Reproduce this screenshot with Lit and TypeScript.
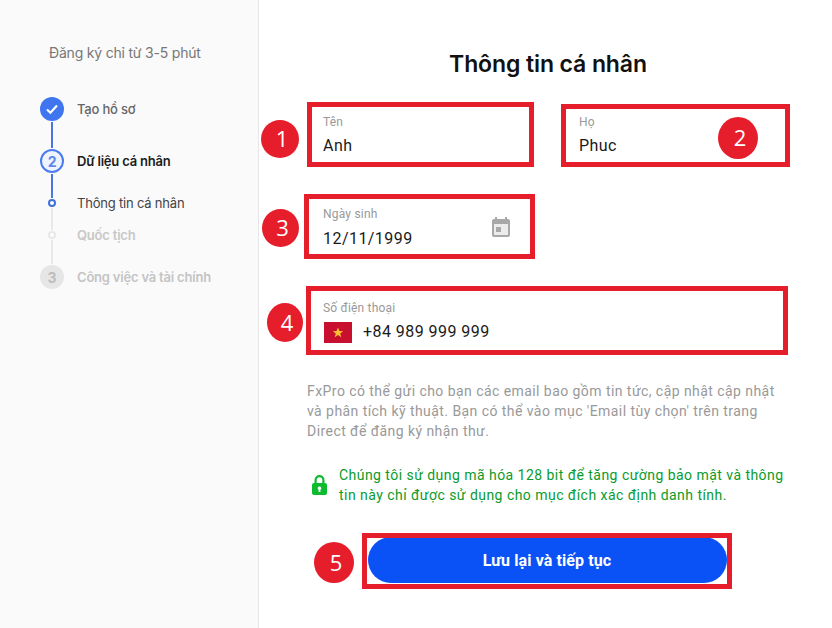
import { LitElement, html, css, svg } from "lit";
import { customElement } from "lit/decorators.js";

const calendarIcon = svg`<path d="M5 3h1V1h2v2h8V1h2v2h1c1.100 0 2 .9 2 2v14c0 1.100-.9 2-2 2H5c-1.100 0-2-.9-2-2V5c0-1.100.9-2 2-2zm0 5v11h14V8H5z" fill="#a8a8a8"/><path d="M5 8h14v11H5z" fill="#ececec"/><path d="M7 11h5v5H7z" fill="#a8a8a8"/>`;

@customElement("app-root")
export class AppRoot extends LitElement {
  static styles = css`
    :host {
      display: block;
      position: relative;
      width: 832px;
      height: 628px;
      overflow: hidden;
      background: #fff;
      font-family: Roboto, "Liberation Sans", sans-serif;
    }
    .page {
      display: flex;
      height: 100%;
    }

    /* sidebar */
    .side {
      width: 258px;
      flex: none;
      background: #fafafa;
      border-right: 1px solid #e6e6e6;
      font-family: Inter, "Liberation Sans", sans-serif;
      letter-spacing: -0.2px;
    }
    .side-title {
      margin: 44px 0 0 49px;
      font-size: 14px;
      line-height: 18px;
      color: #777;
    }
    .steps {
      margin: 35px 0 0 40px;
    }
    .step {
      display: flex;
      gap: 13px;
      font-size: 13px;
    }
    .rail {
      width: 24px;
      flex: none;
      display: flex;
      flex-direction: column;
      align-items: center;
    }
    .line {
      flex: 1;
      width: 2px;
      margin: 1px 0;
      background: #4a76e0;
    }
    .line.off {
      background: #e8e8e8;
    }
    .h1 { height: 52px; }
    .h2 { height: 50px; }
    .h3 { height: 32px; }
    .h4 { height: 34px; }
    .num {
      width: 24px;
      height: 24px;
      box-sizing: border-box;
      flex: none;
      border-radius: 50%;
      display: flex;
      align-items: center;
      justify-content: center;
      font-size: 14px;
      font-weight: 700;
    }
    .num.done { background: #3f76f0; }
    .num.now {
      border: 2px solid #4a7cf0;
      background: #eef3fe;
      color: #5f88ea;
    }
    .num.off {
      background: #e6e6e6;
      color: #bdbdbd;
    }
    .dot {
      width: 8px;
      height: 8px;
      box-sizing: border-box;
      flex: none;
      border-radius: 50%;
      border: 2px solid #3f6fdc;
      background: #fff;
    }
    .dot.off { border-color: #e8e8e8; }
    .label { line-height: 24px; color: #666; font-weight: 500; white-space: nowrap; }
    .label.now { color: #1c1c1c; font-weight: 600; }
    .label.sub { line-height: 8px; color: #444; font-weight: 400; }
    .label.sub.off { color: #c8c8c8; }
    .label.off { color: #c4c4c4; font-weight: 600; }

    /* form */
    .main {
      flex: 1;
      padding-left: 48px;
    }
    .form {
      width: 480px;
    }
    h1 {
      margin: 48px 0 25px;
      padding-left: 2px;
      font: 600 23px/32px Inter, "Liberation Sans", sans-serif;
      letter-spacing: -0.1px;
      color: #111;
      text-align: center;
    }
    .fields {
      display: grid;
      grid-template-columns: 232px 232px;
      column-gap: 24px;
      row-gap: 30px;
    }
    .field {
      position: relative;
      height: 62px;
      box-sizing: border-box;
      padding: 10px 16px 0;
    }
    .field.wide {
      grid-column: 1 / 3;
      margin-top: 2px;
    }
    .field-label {
      font-size: 12px;
      line-height: 14px;
      color: #999;
      letter-spacing: 0.2px;
    }
    .field-value {
      margin-top: 5px;
      font-size: 16px;
      line-height: 24px;
      color: #1a1a1a;
      letter-spacing: 0.45px;
    }
    .field-value.date { margin-top: 6px; }
    .phone {
      display: flex;
      align-items: center;
      gap: 11px;
    }
    .cal {
      position: absolute;
      right: 26px;
      top: 19px;
      width: 24px;
      height: 24px;
    }
    .flag { display: block; margin-left: 1px; }
    .note {
      margin: 28px 0 0;
      font-size: 14px;
      line-height: 20px;
      color: #999;
      letter-spacing: 0.44px;
    }
    .secure {
      display: flex;
      gap: 11px;
      margin: 24px 0 0 4px;
      align-items: center;
      font-size: 14px;
      line-height: 20px;
      color: #0a9b2c;
      letter-spacing: 0.46px;
    }
    .secure svg { flex: none; }
    button {
      display: block;
      width: 359px;
      height: 46px;
      margin: 32px auto 0;
      border: 0;
      border-radius: 23px;
      background: #0a52f6;
      color: #fff;
      font: 700 16px Roboto, sans-serif;
      letter-spacing: 0.1px;
    }

    /* red annotations drawn over the screenshot */
    .box {
      position: absolute;
      box-sizing: border-box;
      border: 5px solid #e61e2b;
    }
    .b1 { left: 307px; top: 102px; width: 227px; height: 65px; }
    .b2 { left: 561px; top: 104px; width: 229px; height: 63px; }
    .b3 { left: 304px; top: 194px; width: 231px; height: 65px; }
    .b4 { left: 306px; top: 286px; width: 482px; height: 69px; }
    .b5 { left: 362px; top: 533px; width: 370px; height: 56px; }
    .badge {
      position: absolute;
      box-sizing: border-box;
      padding: 0 0 2px 4px;
      border-radius: 50%;
      background: #e61e2b;
      color: #fff;
      display: flex;
      align-items: center;
      justify-content: center;
      font: 400 22px "Open Sans", sans-serif;
    }
    .c1 { left: 261px; top: 120px; width: 38px; height: 38px; }
    .c2 { left: 718px; top: 117px; width: 40px; height: 42px; }
    .c3 { left: 262px; top: 209px; width: 37px; height: 38px; }
    .c4 { left: 267px; top: 303px; width: 36px; height: 39px; }
    .c5 { left: 314px; top: 542px; width: 40px; height: 41px; }
  `;

  render() {
    return html`
      <div class="page">
        <aside class="side">
          <div class="side-title">Đăng ký chỉ từ 3-5 phút</div>
          <div class="steps">
            <div class="step h1">
              <div class="rail">
                <div class="num done">
                  <svg width="14" height="14" viewBox="0 0 14 14" fill="none"><path d="M2 7.500l3.400 3.200L12 3.600" stroke="#fff" stroke-width="2.200"/></svg>
                </div>
                <div class="line"></div>
              </div>
              <div class="label">Tạo hồ sơ</div>
            </div>
            <div class="step h2">
              <div class="rail">
                <div class="num now">2</div>
                <div class="line"></div>
              </div>
              <div class="label now">Dữ liệu cá nhân</div>
            </div>
            <div class="step h3">
              <div class="rail">
                <div class="dot"></div>
                <div class="line off"></div>
              </div>
              <div class="label sub">Thông tin cá nhân</div>
            </div>
            <div class="step h4">
              <div class="rail">
                <div class="dot off"></div>
                <div class="line off"></div>
              </div>
              <div class="label sub off">Quốc tịch</div>
            </div>
            <div class="step">
              <div class="rail"><div class="num off">3</div></div>
              <div class="label off">Công việc và tài chính</div>
            </div>
          </div>
        </aside>

        <main class="main">
          <div class="form">
            <h1>Thông tin cá nhân</h1>
            <div class="fields">
              <div class="field">
                <div class="field-label">Tên</div>
                <div class="field-value">Anh</div>
              </div>
              <div class="field">
                <div class="field-label">Họ</div>
                <div class="field-value">Phuc</div>
              </div>
              <div class="field">
                <div class="field-label">Ngày sinh</div>
                <div class="field-value date">12/11/1999</div>
                <svg class="cal" viewBox="0 0 24 24">${calendarIcon}</svg>
              </div>
              <div></div>
              <div class="field wide">
                <div class="field-label">Số điện thoại</div>
                <div class="field-value phone">
                  <svg class="flag" width="28" height="21" viewBox="0 0 28 21">
                    <rect width="28" height="21" fill="#c8102e"/>
                    <path d="M14 5.500l1.400 3.600 3.800.1-3 2.400 1.100 3.700-3.300-2.200-3.300 2.200 1.100-3.700-3-2.400 3.800-.1z" fill="#fbc02d"/>
                  </svg>
                  <span>+84 989 999 999</span>
                </div>
              </div>
            </div>
            <p class="note">
              FxPro có thể gửi cho bạn các email bao gồm tin tức, cập nhật cập nhật
              và phân tích kỹ thuật. Bạn có thể vào mục 'Email tùy chọn' trên trang
              Direct để đăng ký nhận thư.
            </p>
            <div class="secure">
              <svg width="17" height="20" viewBox="0 0 17 20">
                <path fill-rule="evenodd" fill="#0dbb2f" d="M3.500 8V5a5 5 0 0 1 10 0v3h.5a2 2 0 0 1 2 2v8a2 2 0 0 1-2 2H3a2 2 0 0 1-2-2v-8a2 2 0 0 1 2-2zm2.200 0h5.600V5a2.800 2.800 0 0 0-5.600 0zM8.500 11.500a1.800 1.800 0 0 0-.9 3.360V17h1.800v-2.140a1.800 1.800 0 0 0-.9-3.360z"/>
              </svg>
              <span>Chúng tôi sử dụng mã hóa 128 bit để tăng cường bảo mật và thông tin này chỉ được sử dụng cho mục đích xác định danh tính.</span>
            </div>
            <button>Lưu lại và tiếp tục</button>
          </div>
        </main>
      </div>

      <div class="box b1"></div>
      <div class="box b2"></div>
      <div class="box b3"></div>
      <div class="box b4"></div>
      <div class="box b5"></div>
      <div class="badge c1">1</div>
      <div class="badge c2">2</div>
      <div class="badge c3">3</div>
      <div class="badge c4">4</div>
      <div class="badge c5">5</div>
    `;
  }
}

declare global {
  interface HTMLElementTagNameMap {
    "app-root": AppRoot;
  }
}
